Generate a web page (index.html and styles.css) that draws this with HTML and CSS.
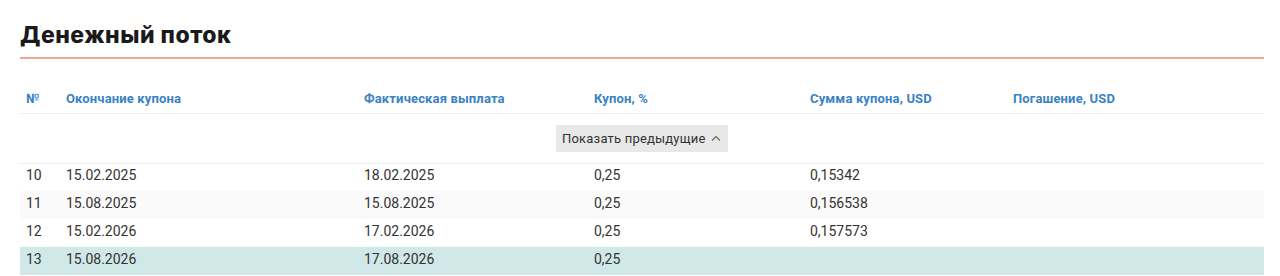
FILE: index.html
```html
<!DOCTYPE html>
<html lang="ru">
<head>
<meta charset="utf-8">
<link rel="stylesheet" href="styles.css">
</head>
<body>
<section class="card">
  <h2 class="title">Денежный поток</h2>
  <table class="flow">
    <colgroup>
      <col class="c-num"><col class="c-end"><col class="c-fact"><col class="c-cup"><col class="c-sum"><col class="c-red">
    </colgroup>
    <thead>
      <tr>
        <th>№</th>
        <th>Окончание купона</th>
        <th>Фактическая выплата</th>
        <th>Купон, %</th>
        <th>Сумма купона, USD</th>
        <th>Погашение, USD</th>
      </tr>
    </thead>
    <tbody>
      <tr class="more-row">
        <td colspan="3"></td>
        <td colspan="3"><button class="more">Показать предыдущие <svg class="chev" width="10" height="6" viewBox="0 0 10 6"><path d="M1 5.5 L5 1.5 L9 5.5" fill="none" stroke="#666" stroke-width="1.1"/></svg></button></td>
      </tr>
      <tr><td>10</td><td>15.02.2025</td><td>18.02.2025</td><td>0,25</td><td>0,15342</td><td></td></tr>
      <tr class="alt"><td>11</td><td>15.08.2025</td><td>15.08.2025</td><td>0,25</td><td>0,156538</td><td></td></tr>
      <tr><td>12</td><td>15.02.2026</td><td>17.02.2026</td><td>0,25</td><td>0,157573</td><td></td></tr>
      <tr class="current"><td>13</td><td>15.08.2026</td><td>17.08.2026</td><td>0,25</td><td></td><td></td></tr>
    </tbody>
  </table>
</section>
</body>
</html>
```

FILE: styles.css
```css
* { box-sizing: border-box; }
html, body { margin: 0; padding: 0; background: #fff; }
body { font-family: Roboto, "Liberation Sans", sans-serif; color: #333; }
.card { padding: 20px 16px 0 20px; }
.title {
  margin: 0;
  font-family: Inter, "Noto Sans", sans-serif;
  font-weight: 800;
  font-size: 23px;
  letter-spacing: 0.5px;
  line-height: 30px;
  color: #1a1a1a;
  padding-bottom: 7px;
  border-bottom: 2px solid #f4a593;
}
.flow {
  width: 100%;
  border-collapse: collapse;
  margin-top: 25px;
  font-size: 14px;
}
.c-num { width: 40px; }
.c-end { width: 298px; }
.c-fact { width: 230px; }
.c-cup { width: 216px; }
.c-sum { width: 203px; }
.flow th {
  text-align: left;
  font-weight: 700;
  font-size: 13px;
  letter-spacing: 0.15px;
  color: #3a82c4;
  height: 29px;
  padding: 0 6px;
  border-bottom: 1px solid #eeeeee;
}
.flow td {
  height: 28px;
  padding: 0 6px 5px;
  color: #333;
}
.more-row td { height: 50px; padding-bottom: 0; border-bottom: 1px solid #eeeeee; }
.more-row td:nth-child(2) { padding-left: 0; }
.more {
  margin-left: -32px;
  border: none;
  background: #e8e8e8;
  font-family: Roboto, "Liberation Sans", sans-serif;
  font-size: 13px;
  letter-spacing: 0.2px;
  color: #333;
  height: 27px;
  padding: 0 7px 0 6px;
  display: inline-flex;
  align-items: center;
  gap: 6px;
}
.chev { margin-top: -1px; }
.alt td { background: #fafafa; }
.current td { background: #d1e8e8; }
```
